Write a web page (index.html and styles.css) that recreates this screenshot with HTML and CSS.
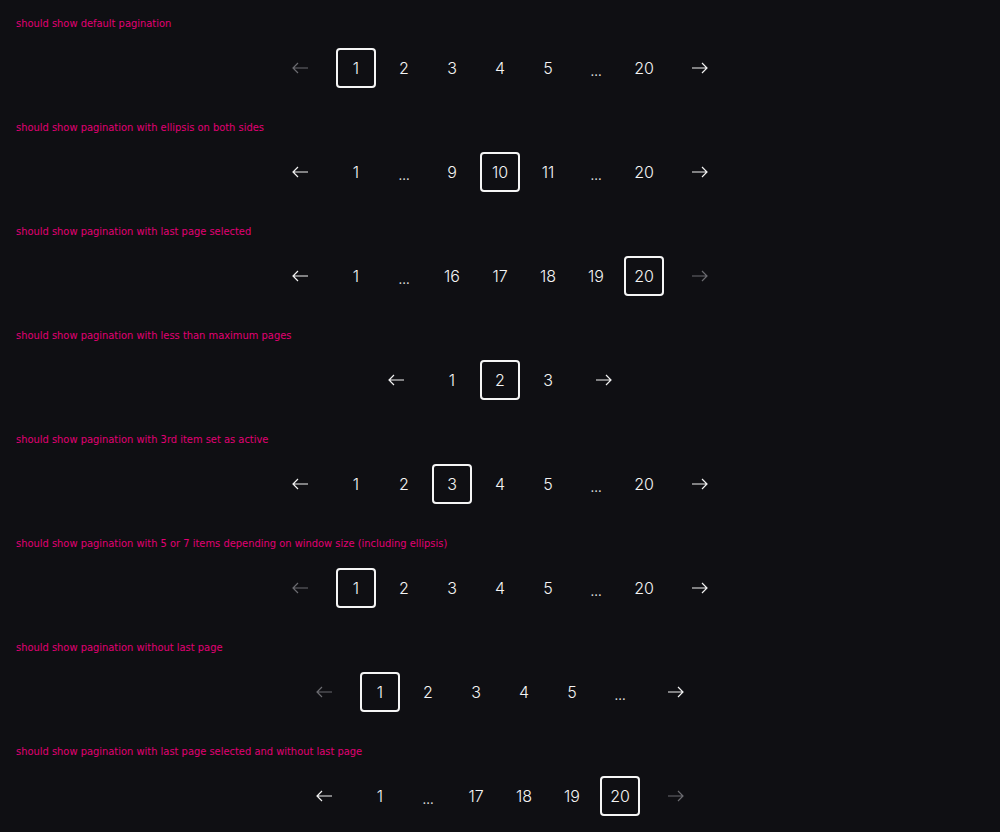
FILE: index.html
```html
<!DOCTYPE html>
<html>
<head>
<meta charset="utf-8">
<link rel="stylesheet" href="styles.css">
</head>
<body>
<main class="page">
  <section class="story">
    <p class="label">should show default pagination</p>
    <nav class="pagination">
      <span class="arrow disabled"><svg viewBox="0 0 16 12"><path d="M16 6H1M6 1L1 6l5 5"/></svg></span>
      <span class="item active">1</span><span class="item">2</span><span class="item">3</span><span class="item">4</span><span class="item">5</span><span class="item ellipsis">…</span><span class="item">20</span>
      <span class="arrow"><svg viewBox="0 0 16 12"><path d="M0 6h15M10 1l5 5-5 5"/></svg></span>
    </nav>
  </section>
  <section class="story">
    <p class="label">should show pagination with ellipsis on both sides</p>
    <nav class="pagination">
      <span class="arrow"><svg viewBox="0 0 16 12"><path d="M16 6H1M6 1L1 6l5 5"/></svg></span>
      <span class="item">1</span><span class="item ellipsis">…</span><span class="item">9</span><span class="item active">10</span><span class="item">11</span><span class="item ellipsis">…</span><span class="item">20</span>
      <span class="arrow"><svg viewBox="0 0 16 12"><path d="M0 6h15M10 1l5 5-5 5"/></svg></span>
    </nav>
  </section>
  <section class="story">
    <p class="label">should show pagination with last page selected</p>
    <nav class="pagination">
      <span class="arrow"><svg viewBox="0 0 16 12"><path d="M16 6H1M6 1L1 6l5 5"/></svg></span>
      <span class="item">1</span><span class="item ellipsis">…</span><span class="item">16</span><span class="item">17</span><span class="item">18</span><span class="item">19</span><span class="item active">20</span>
      <span class="arrow disabled"><svg viewBox="0 0 16 12"><path d="M0 6h15M10 1l5 5-5 5"/></svg></span>
    </nav>
  </section>
  <section class="story">
    <p class="label">should show pagination with less than maximum pages</p>
    <nav class="pagination">
      <span class="arrow"><svg viewBox="0 0 16 12"><path d="M16 6H1M6 1L1 6l5 5"/></svg></span>
      <span class="item">1</span><span class="item active">2</span><span class="item">3</span>
      <span class="arrow"><svg viewBox="0 0 16 12"><path d="M0 6h15M10 1l5 5-5 5"/></svg></span>
    </nav>
  </section>
  <section class="story">
    <p class="label">should show pagination with 3rd item set as active</p>
    <nav class="pagination">
      <span class="arrow"><svg viewBox="0 0 16 12"><path d="M16 6H1M6 1L1 6l5 5"/></svg></span>
      <span class="item">1</span><span class="item">2</span><span class="item active">3</span><span class="item">4</span><span class="item">5</span><span class="item ellipsis">…</span><span class="item">20</span>
      <span class="arrow"><svg viewBox="0 0 16 12"><path d="M0 6h15M10 1l5 5-5 5"/></svg></span>
    </nav>
  </section>
  <section class="story">
    <p class="label">should show pagination with 5 or 7 items depending on window size (including ellipsis)</p>
    <nav class="pagination">
      <span class="arrow disabled"><svg viewBox="0 0 16 12"><path d="M16 6H1M6 1L1 6l5 5"/></svg></span>
      <span class="item active">1</span><span class="item">2</span><span class="item">3</span><span class="item">4</span><span class="item">5</span><span class="item ellipsis">…</span><span class="item">20</span>
      <span class="arrow"><svg viewBox="0 0 16 12"><path d="M0 6h15M10 1l5 5-5 5"/></svg></span>
    </nav>
  </section>
  <section class="story">
    <p class="label">should show pagination without last page</p>
    <nav class="pagination">
      <span class="arrow disabled"><svg viewBox="0 0 16 12"><path d="M16 6H1M6 1L1 6l5 5"/></svg></span>
      <span class="item active">1</span><span class="item">2</span><span class="item">3</span><span class="item">4</span><span class="item">5</span><span class="item ellipsis">…</span>
      <span class="arrow"><svg viewBox="0 0 16 12"><path d="M0 6h15M10 1l5 5-5 5"/></svg></span>
    </nav>
  </section>
  <section class="story">
    <p class="label">should show pagination with last page selected and without last page</p>
    <nav class="pagination">
      <span class="arrow"><svg viewBox="0 0 16 12"><path d="M16 6H1M6 1L1 6l5 5"/></svg></span>
      <span class="item">1</span><span class="item ellipsis">…</span><span class="item">17</span><span class="item">18</span><span class="item">19</span><span class="item active">20</span>
      <span class="arrow disabled"><svg viewBox="0 0 16 12"><path d="M0 6h15M10 1l5 5-5 5"/></svg></span>
    </nav>
  </section>
</main>
</body>
</html>
```

FILE: styles.css
```css
html, body {
  margin: 0;
  padding: 0;
  background: #0f0f13;
}

.page {
  padding: 16px;
  display: flex;
  flex-direction: column;
  gap: 32px;
}

.story {
  display: flex;
  flex-direction: column;
  gap: 16px;
}

.label {
  margin: 0;
  height: 16px;
  line-height: 16px;
  font-family: "DejaVu Sans Condensed", "DejaVu Sans", sans-serif;
  font-stretch: condensed;
  font-size: 11px;
  color: #e20074;
}

.pagination {
  display: flex;
  justify-content: center;
  align-items: center;
  gap: 8px;
  height: 40px;
}

.item {
  box-sizing: border-box;
  width: 40px;
  height: 40px;
  display: flex;
  align-items: center;
  justify-content: center;
  font-family: Inter, "Noto Sans", sans-serif;
  font-weight: 300;
  font-size: 16px;
  color: #f4f4f4;
  border-radius: 4px;
}

.item.active {
  border: 2px solid #f5f5f5;
}

.item.ellipsis {
  font-size: 13px;
  font-weight: 400;
  padding-top: 6px;
  color: #d8d8d8;
}

.arrow {
  width: 40px;
  height: 40px;
  display: flex;
  align-items: center;
  justify-content: center;
}

.arrow:first-child { margin-right: 8px; }
.arrow:last-child { margin-left: 8px; }

.arrow svg {
  width: 16px;
  height: 12px;
  fill: none;
  stroke: #f2f2f2;
  stroke-width: 1.2;
}

.arrow.disabled svg {
  stroke: #6b6b70;
}
```
